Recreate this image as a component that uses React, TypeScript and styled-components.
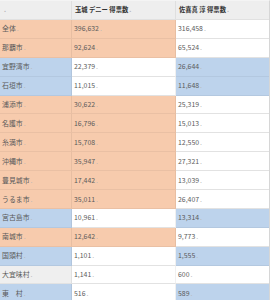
import React from "react";
import styled, { createGlobalStyle } from "styled-components";

const Global = createGlobalStyle`
  html, body { margin: 0; padding: 0; background: #ffffff; }
  body { font-family: "Noto Sans CJK JP", "Noto Sans", sans-serif; overflow: hidden; }
`;

type Tone = "o" | "b" | "w" | "g" | "h";

const bg: Record<Tone, string> = {
  o: "#f7cbad",
  b: "#bdd3ec",
  w: "#ffffff",
  g: "#efefef",
  h: "#eeeeee",
};

const Frame = styled.div`
  width: 270px;
  border-right: 1px solid #d6d6d6;
  border-top: 1px solid #f4f4f4;
  box-sizing: border-box;
`;

const Table = styled.div`
  display: grid;
  grid-template-columns: 72px 104px 93px;
  width: 269px;
`;

const Cell = styled.div<{ $tone: Tone; $head?: boolean; $last?: boolean }>`
  box-sizing: border-box;
  height: ${(p) => (p.$head ? "19px" : "18.9px")};
  background: ${(p) => bg[p.$tone]};
  border-bottom: 1px solid ${(p) => (p.$tone === "w" ? "#e2e2e2" : "rgba(0,0,0,0.05)")};
  border-right: ${(p) => (p.$last ? "none" : "1px solid rgba(0,0,0,0.06)")};
  display: flex;
  align-items: center;
  padding-left: ${(p) => (p.$head ? "3px" : "2px")};
  font-size: ${(p) => (p.$head ? "6.3px" : "6.9px")};
  line-height: 1;
  color: ${(p) => (p.$head ? "#333" : "#5a5a5a")};
  font-weight: ${(p) => (p.$head ? 700 : 400)};
  white-space: nowrap;
  overflow: hidden;
`;

const Dot = styled.span`
  color: #b8b8b8;
  margin-left: 1px;
`;

const rows: [string, string, string, Tone, Tone, Tone][] = [
  ["全体", "396,632", "316,458", "o", "o", "w"],
  ["那覇市", "92,624", "65,524", "o", "o", "w"],
  ["宜野湾市", "22,379", "26,644", "b", "w", "b"],
  ["石垣市", "11,015", "11,648", "b", "w", "b"],
  ["浦添市", "30,622", "25,319", "o", "o", "w"],
  ["名護市", "16,796", "15,013", "o", "o", "w"],
  ["糸満市", "15,708", "12,550", "o", "o", "w"],
  ["沖縄市", "35,947", "27,321", "o", "o", "w"],
  ["豊見城市", "17,442", "13,039", "o", "o", "w"],
  ["うるま市", "35,011", "26,407", "o", "o", "w"],
  ["宮古島市", "10,961", "13,314", "b", "w", "b"],
  ["南城市", "12,642", "9,773", "o", "o", "w"],
  ["国頭村", "1,101", "1,555", "b", "w", "b"],
  ["大宜味村", "1,141", "600", "g", "w", "w"],
  ["東　村", "516", "589", "b", "w", "b"],
];

export default function App() {
  return (
    <>
      <Global />
      <Frame>
        <Table>
          <Cell $tone="h" $head>
            <Dot>.</Dot>
          </Cell>
          <Cell $tone="h" $head>
            玉城 デニー 得票数<Dot>.</Dot>
          </Cell>
          <Cell $tone="h" $head $last>
            佐喜真 淳 得票数<Dot>.</Dot>
          </Cell>
          {rows.map(([name, a, b, t1, t2, t3]) => (
            <React.Fragment key={name}>
              <Cell $tone={t1}>
                {name}
                <Dot>.</Dot>
              </Cell>
              <Cell $tone={t2}>
                {a}
                <Dot>.</Dot>
              </Cell>
              <Cell $tone={t3} $last>
                {b}
                <Dot>.</Dot>
              </Cell>
            </React.Fragment>
          ))}
        </Table>
      </Frame>
    </>
  );
}
